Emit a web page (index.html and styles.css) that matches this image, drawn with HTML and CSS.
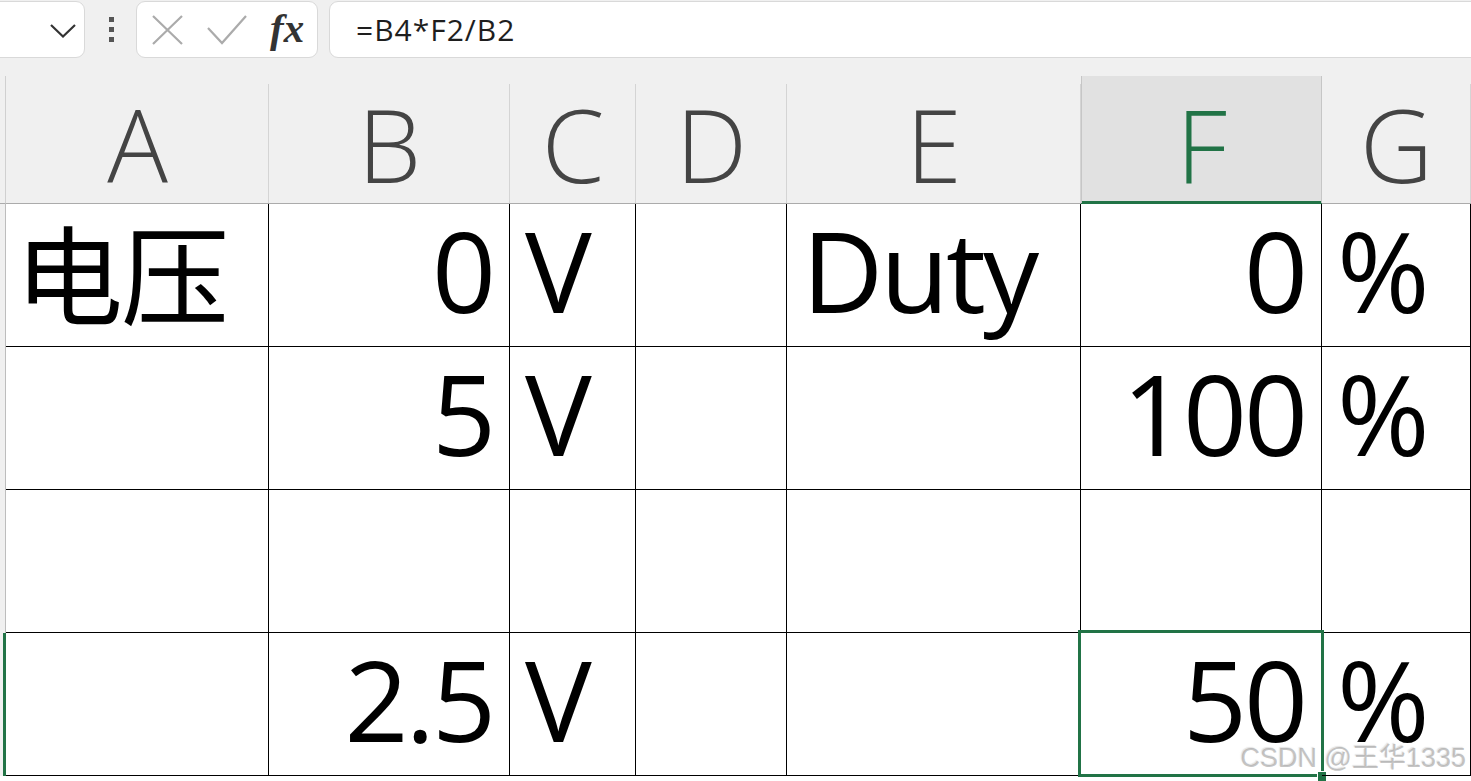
FILE: index.html
```html
<!DOCTYPE html>
<html lang="zh">
<head>
<meta charset="utf-8">
<title>Sheet</title>
<link rel="stylesheet" href="styles.css">
</head>
<body>
<div class="top">
  <div class="toolbar">
    <div class="namebox">
      <svg class="chev" width="26" height="14" viewBox="0 0 26 14"><polyline points="1,1 13,12.5 25,1" fill="none" stroke="#333" stroke-width="2.2"/></svg>
    </div>
    <div class="kebab"><span></span><span></span><span></span></div>
    <div class="fxbox">
      <svg class="icon-x" width="31" height="30" viewBox="0 0 31 30"><path d="M1 1 L30 29 M30 1 L1 29" stroke="#ababab" stroke-width="2.2" fill="none"/></svg>
      <svg class="icon-check" width="40" height="30" viewBox="0 0 40 30"><polyline points="1,13 15,28 39,1" stroke="#ababab" stroke-width="2.2" fill="none"/></svg>
      <span class="fx">fx</span>
    </div>
    <div class="formula">=B4*F2/B2</div>
  </div>
</div>
<div class="sheet">
  <div class="corner"></div>
  <div class="colhead">A</div>
  <div class="colhead">B</div>
  <div class="colhead">C</div>
  <div class="colhead">D</div>
  <div class="colhead">E</div>
  <div class="colhead sel">F</div>
  <div class="colhead">G</div>

  <div class="rowhead"></div>
  <div class="cell cjk">电压</div>
  <div class="cell num">0</div>
  <div class="cell">V</div>
  <div class="cell"></div>
  <div class="cell">Duty</div>
  <div class="cell num">0</div>
  <div class="cell">%</div>

  <div class="rowhead"></div>
  <div class="cell"></div>
  <div class="cell num">5</div>
  <div class="cell">V</div>
  <div class="cell"></div>
  <div class="cell"></div>
  <div class="cell num">100</div>
  <div class="cell">%</div>

  <div class="rowhead"></div>
  <div class="cell"></div>
  <div class="cell"></div>
  <div class="cell"></div>
  <div class="cell"></div>
  <div class="cell"></div>
  <div class="cell"></div>
  <div class="cell"></div>

  <div class="rowhead active"></div>
  <div class="cell"></div>
  <div class="cell num">2.5</div>
  <div class="cell">V</div>
  <div class="cell"></div>
  <div class="cell"></div>
  <div class="cell num selected">50<span class="selbox"></span><span class="handle"></span></div>
  <div class="cell">%</div>
</div>
<div class="watermark">CSDN @王华1335</div>
</body>
</html>
```

FILE: styles.css
```css
html, body {
  margin: 0;
  padding: 0;
  background: #ffffff;
  overflow: hidden;
}

body {
  width: 1471px;
  height: 781px;
  position: relative;
  font-family: "Open Sans", "Noto Sans", "Noto Sans CJK SC", sans-serif;
}

.top {
  background: #f0f0f0;
  height: 76px;
  overflow: hidden;
}

.toolbar {
  display: flex;
  align-items: stretch;
  height: 57px;
  padding-top: 1px;
}

.namebox {
  margin-left: -12px;
  width: 97px;
  background: #fff;
  border: 1px solid #d9d9d9;
  border-radius: 9px;
  display: flex;
  align-items: center;
  justify-content: flex-end;
  padding-right: 8px;
  box-sizing: border-box;
}

.chev {
  margin-top: 3px;
}

.kebab {
  margin-left: 24px;
  width: 5px;
  display: flex;
  flex-direction: column;
  justify-content: center;
  gap: 5px;
}

.kebab span {
  display: block;
  width: 5px;
  height: 5px;
  background: #555;
}

.fxbox {
  margin-left: 22px;
  width: 182px;
  box-sizing: border-box;
  background: #fff;
  border: 1px solid #d9d9d9;
  border-radius: 9px;
  display: flex;
  align-items: center;
  padding-left: 15px;
}

.icon-x {
  margin-top: 1px;
}

.icon-check {
  margin-left: 24px;
}

.fx {
  margin-left: 23px;
  font-family: "Liberation Serif", "DejaVu Serif", serif;
  font-style: italic;
  font-weight: 700;
  font-size: 41px;
  color: #333;
  line-height: 1;
  margin-top: -2px;
}

.formula {
  margin-left: 11px;
  flex: 1;
  margin-right: -12px;
  background: #fff;
  border: 1px solid #d9d9d9;
  border-radius: 9px;
  display: flex;
  align-items: center;
  padding-left: 26px;
  font-family: "Open Sans", "Noto Sans", sans-serif;
  font-size: 30px;
  color: #1e1e1e;
  letter-spacing: 1px;
}

.sheet {
  display: grid;
  grid-template-columns: 6px 263px 241px 126px 151px 294px 241px 149px;
  grid-template-rows: 128px repeat(4, 143px);
  background: #fff;
}

.corner {
  background: #f0f0f0;
  border-bottom: 1px solid #ababab;
  border-right: 1px solid #d0d0d0;
  box-sizing: border-box;
}

.colhead {
  box-sizing: border-box;
  background-color: #f0f0f0;
  background-image: linear-gradient(to left, #d4d4d4 1px, transparent 1px);
  background-repeat: no-repeat;
  background-position: right bottom;
  background-size: 100% calc(100% - 8px);
  border-bottom: 1px solid #ababab;
  display: flex;
  align-items: flex-end;
  justify-content: center;
  padding-bottom: 8px;
  font-family: "Open Sans", "Noto Sans", sans-serif;
  font-weight: 300;
  font-size: 101px;
  line-height: 1;
  color: #444;
}

.colhead.sel {
  background-color: #e1e1e1;
  background-image: none;
  color: #217346;
  border-bottom-color: #217346;
  box-shadow: inset 1px 0 0 #c6c6c6, inset -1px 0 0 #c6c6c6, inset 0 -2px 0 #217346;
}

.rowhead {
  box-sizing: border-box;
  background: #f0f0f0;
  border-right: 1px solid #bdbdbd;
}

.rowhead.active {
  background: linear-gradient(to right, #f0f0f0 3px, #217346 3px);
  border-right-color: #217346;
}

.cell {
  box-sizing: border-box;
  border-right: 1px solid #000;
  border-bottom: 1px solid #000;
  display: flex;
  align-items: flex-end;
  padding: 0 12px 20px 15px;
  font-size: 112px;
  letter-spacing: -3px;
  line-height: 1;
  color: #000;
  position: relative;
  white-space: nowrap;
}

.cell.num {
  justify-content: flex-end;
  padding-right: 16px;
}

.cell.cjk {
  font-family: "Noto Sans CJK SC", sans-serif;
  font-size: 108px;
  letter-spacing: -2px;
  padding-left: 9px;
  padding-bottom: 22px;
}

.selbox {
  position: absolute;
  left: -3px;
  top: -3px;
  right: -3px;
  bottom: -2px;
  border: 3px solid #217346;
  pointer-events: none;
}

.handle {
  position: absolute;
  right: -5px;
  bottom: -6px;
  width: 8px;
  height: 9px;
  background: #217346;
  outline: 1px solid #fff;
}

.watermark {
  position: absolute;
  right: 5px;
  top: 736px;
  font-family: "Liberation Sans", "Noto Sans CJK SC", sans-serif;
  font-size: 27px;
  color: rgba(140, 140, 140, 0.5);
  text-shadow: 1px 1px 1px rgba(255, 255, 255, 0.9), -1px -1px 1px rgba(200, 200, 200, 0.5);
  white-space: nowrap;
}
```
